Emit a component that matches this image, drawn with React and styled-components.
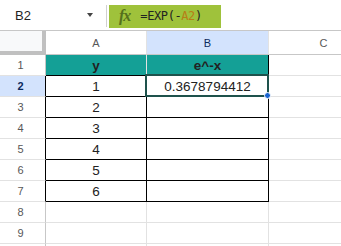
import React from "react";
import styled, { createGlobalStyle } from "styled-components";

const GlobalStyle = createGlobalStyle`
  html, body {
    margin: 0;
    padding: 0;
    background: #ffffff;
    overflow: hidden;
  }
  body {
    font-family: "Liberation Sans", Arial, sans-serif;
  }
`;

const Page = styled.div`
  width: 341px;
  height: 246px;
  overflow: hidden;
  background: #fff;
`;

const Toolbar = styled.div`
  height: 30px;
  border-bottom: 1px solid #c7c7c7;
  display: flex;
  align-items: center;
`;

const NameBox = styled.div`
  width: 106px;
  height: 100%;
  box-sizing: border-box;
  display: flex;
  align-items: center;
  justify-content: space-between;
  padding: 0 13px 0 15px;
  font-size: 13px;
  color: #1f1f1f;
`;

const Caret = styled.span`
  width: 0;
  height: 0;
  border-left: 3.5px solid transparent;
  border-right: 3.5px solid transparent;
  border-top: 4px solid #444;
`;

const Divider = styled.div`
  width: 1px;
  height: 22px;
  background: #d0d0d0;
  margin-top: 2px;
`;

const Formula = styled.div`
  margin-left: 2px;
  margin-top: 2px;
  width: 112px;
  height: 23px;
  background: #9fc23b;
  display: flex;
  align-items: center;
  padding-left: 10px;
  box-sizing: border-box;
`;

const Fx = styled.span`
  font-family: "Liberation Serif", "Times New Roman", serif;
  font-style: italic;
  font-size: 16px;
  font-weight: bold;
  color: #55701c;
  letter-spacing: -1px;
  margin-right: 10px;
`;

const Expr = styled.span`
  font-family: "DejaVu Sans Mono", monospace;
  font-size: 12px;
  letter-spacing: -0.4px;
  color: #222;
`;

const Ref = styled.span`
  color: #b87d16;
`;

const Grid = styled.div`
  display: grid;
  grid-template-columns: 46px 101px 122px 110px;
  grid-template-rows: 24px repeat(10, 21px);
`;

const Cell = styled.div`
  position: relative;
  box-sizing: border-box;
  border-right: 1px solid ${p => (p.$right ? "#000" : "#e2e2e2")};
  border-bottom: 1px solid ${p => (p.$bottom ? "#000" : "#e2e2e2")};
  background: ${p => p.$bg || "#fff"};
  display: flex;
  align-items: flex-end;
  justify-content: center;
  padding-bottom: 2px;
  font-size: 13.5px;
  font-weight: ${p => (p.$bold ? 700 : 400)};
  color: #222;
`;

const Corner = styled.div`
  box-sizing: border-box;
  background: #f8f9fa;
  border-right: 4px solid #c0c0c0;
  border-bottom: 4px solid #c0c0c0;
`;

const ColHead = styled.div`
  box-sizing: border-box;
  border-right: 1px solid #e2e2e2;
  border-bottom: 1px solid #c7c7c7;
  background: ${p => (p.$active ? "#d3e3fd" : "#fff")};
  color: ${p => (p.$active ? "#0b2a5c" : "#575757")};
  font-size: 11px;
  display: flex;
  align-items: center;
  justify-content: center;
`;

const RowHead = styled.div`
  box-sizing: border-box;
  border-right: 1px solid ${p => (p.$dark ? "#000" : "#c7c7c7")};
  border-bottom: 1px solid #e2e2e2;
  background: ${p => (p.$active ? "#d3e3fd" : "#fff")};
  color: ${p => (p.$active ? "#0b2a5c" : "#575757")};
  font-weight: ${p => (p.$active ? 700 : 400)};
  font-size: 11px;
  display: flex;
  align-items: center;
  justify-content: center;
  padding-right: 4px;
`;

const Selection = styled.div`
  position: absolute;
  left: -2px;
  top: -2px;
  right: -1px;
  bottom: -1px;
  border: 2px solid #1e524c;
  pointer-events: none;
`;

const Handle = styled.div`
  position: absolute;
  right: -4px;
  bottom: -4px;
  width: 7px;
  height: 7px;
  border-radius: 50%;
  background: #1a64d0;
  border: 1px solid #fff;
  box-sizing: border-box;
  z-index: 2;
`;

const values = [1, 2, 3, 4, 5, 6];
const teal = "#14a096";

export default function App() {
  return (
    <Page>
      <GlobalStyle />
      <Toolbar>
        <NameBox>
          B2
          <Caret />
        </NameBox>
        <Divider />
        <Formula>
          <Fx>fx</Fx>
          <Expr>
            =EXP(-<Ref>A2</Ref>)
          </Expr>
        </Formula>
      </Toolbar>
      <Grid>
        <Corner />
        <ColHead>A</ColHead>
        <ColHead $active>B</ColHead>
        <ColHead>C</ColHead>

        <RowHead>1</RowHead>
        <Cell $bg={teal} $bold $bottom>y</Cell>
        <Cell $bg={teal} $bold $bottom $right>e^-x</Cell>
        <Cell />

        {values.map((v, i) => (
          <React.Fragment key={v}>
            <RowHead $active={i === 0} $dark>{i + 2}</RowHead>
            <Cell $right $bottom>{v}</Cell>
            <Cell $right $bottom>
              {i === 0 && "0.3678794412"}
              {i === 0 && (
                <Selection>
                  <Handle />
                </Selection>
              )}
            </Cell>
            <Cell />
          </React.Fragment>
        ))}

        {["8", "9", ""].map(n => (
          <React.Fragment key={n || "last"}>
            <RowHead>{n}</RowHead>
            <Cell />
            <Cell />
            <Cell />
          </React.Fragment>
        ))}
      </Grid>
    </Page>
  );
}
